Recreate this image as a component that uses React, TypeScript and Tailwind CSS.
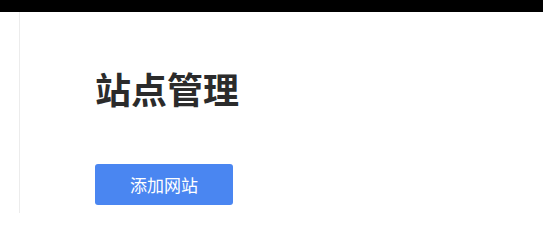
export default function App() {
  return (
    <div className="flex h-[213px] w-[543px] flex-col overflow-hidden bg-white font-['Noto_Sans_CJK_SC',sans-serif]">
      <div className="h-3 shrink-0 bg-black" />
      <div className="flex flex-1">
        <div className="w-5 shrink-0 border-r border-[#ececec]" />
        <main className="flex-1 pl-[75px] pt-[56px]">
          <h1 className="text-[36px] font-bold leading-[40px] text-[#2b2b2b]">站点管理</h1>
          <button className="mt-[56px] flex h-[41px] w-[138px] items-center justify-center rounded-[3px] bg-[#4a86f1] text-[17px] text-white">
            添加网站
          </button>
        </main>
      </div>
    </div>
  );
}
